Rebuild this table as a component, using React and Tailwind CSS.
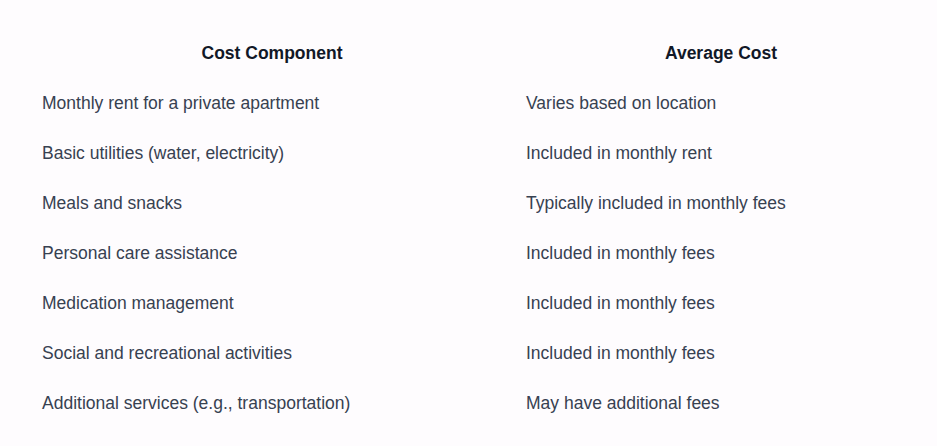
export default function App() {
  const rows = [
    ["Monthly rent for a private apartment", "Varies based on location"],
    ["Basic utilities (water, electricity)", "Included in monthly rent"],
    ["Meals and snacks", "Typically included in monthly fees"],
    ["Personal care assistance", "Included in monthly fees"],
    ["Medication management", "Included in monthly fees"],
    ["Social and recreational activities", "Included in monthly fees"],
    ["Additional services (e.g., transportation)", "May have additional fees"],
  ];
  return (
    <div className="min-h-[446px] w-full bg-[#fefcfe] pt-[28px] pl-[30px] font-['Liberation_Sans',Arial,sans-serif]">
      <table className="w-[898px] table-fixed border-collapse">
        <colgroup>
          <col className="w-[484px]" />
          <col className="w-[414px]" />
        </colgroup>
        <thead>
          <tr>
            <th className="px-3 py-[13px] text-center text-[17.5px] leading-6 font-bold text-[#111827]">Cost Component</th>
            <th className="px-3 py-[13px] text-center text-[17.5px] leading-6 font-bold text-[#111827]">Average Cost</th>
          </tr>
        </thead>
        <tbody>
          {rows.map(([a, b]) => (
            <tr key={a}>
              <td className="px-3 py-[13px] text-left text-[17.5px] leading-6 text-[#374151]">{a}</td>
              <td className="px-3 py-[13px] text-left text-[17.5px] leading-6 text-[#374151]">{b}</td>
            </tr>
          ))}
        </tbody>
      </table>
    </div>
  );
}
